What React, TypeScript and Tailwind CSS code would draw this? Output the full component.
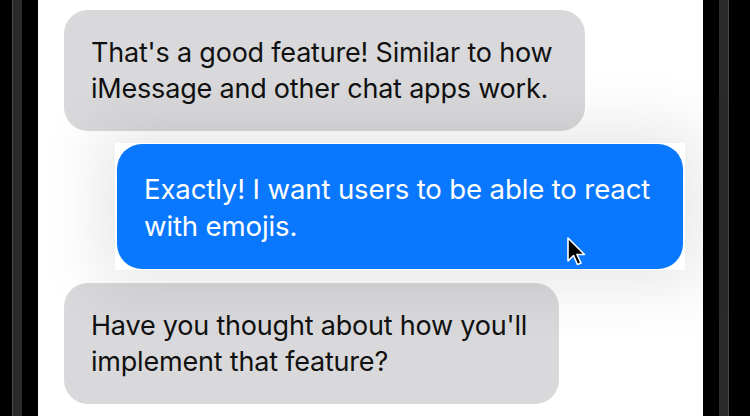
export default function App() {
  return (
    <div className="flex h-[416px] w-[750px] overflow-hidden bg-black" style={{ fontFamily: 'Inter, "Noto Sans", sans-serif' }}>
      <div className="flex h-full w-[38px] shrink-0">
        <div className="w-[12px] bg-black" />
        <div className="w-[1px] bg-[#4a4a4a]" />
        <div className="w-[9px] bg-[#2a2a2a]" />
        <div className="flex-1 bg-black" />
      </div>
      <div className="flex h-full w-[665px] shrink-0 flex-col bg-white">
        <div className="ml-[26px] mt-[10px] h-[121px] w-[521px] rounded-[24px] bg-[#d9d9db] px-[27px] pt-[25px] text-[27px] leading-[36px] tracking-[-0.2px] text-[#111]">
          That's a good feature! Similar to how iMessage and other chat apps work.
        </div>
        <div className="relative z-10 ml-[77px] mt-[12px] h-[127px] w-[570px] bg-white px-[2px] py-[1px] shadow-[0_0_60px_18px_rgba(0,0,0,0.09)]">
          <div className="h-full w-full rounded-[25px] bg-[#0a78fe] px-[27px] pt-[27px] text-[27.6px] leading-[37px] tracking-[-0.15px] text-white">
            Exactly! I want users to be able to react with emojis.
          </div>
          <svg className="absolute left-[451px] top-[94px]" width="22" height="32" viewBox="0 0 22 32">
            <path d="M2 1 L2 24 L7.5 18.5 L11.5 27.5 L15 26 L11 17.5 L18.5 17.5 Z" fill="#000" stroke="#fff" strokeWidth="1.6" strokeLinejoin="round" />
          </svg>
        </div>
        <div className="ml-[26px] mt-[13px] h-[121px] w-[495px] rounded-[24px] bg-[#d9d9db] px-[27px] pt-[25px] text-[27px] leading-[36px] tracking-[-0.2px] text-[#111]">
          Have you thought about how you'll implement that feature?
        </div>
      </div>
      <div className="flex h-full flex-1">
        <div className="w-[16px] bg-black" />
        <div className="w-[9px] bg-[#2a2a2a]" />
        <div className="w-[1px] bg-[#4a4a4a]" />
        <div className="flex-1 bg-black" />
      </div>
    </div>
  );
}
